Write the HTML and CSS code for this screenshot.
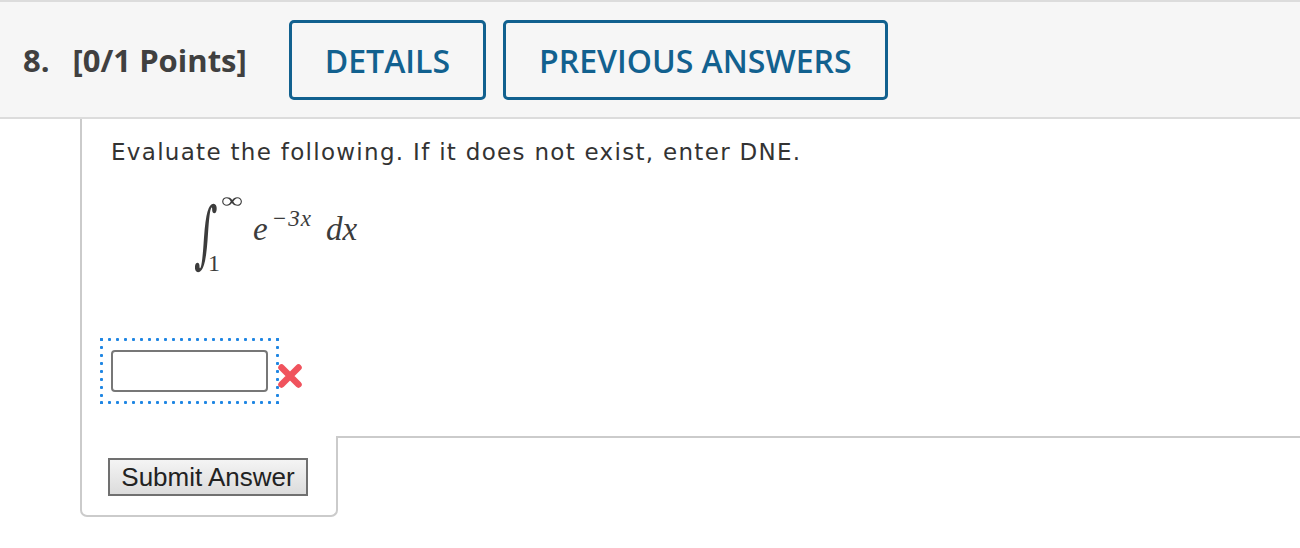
FILE: index.html
```html
<!DOCTYPE html>
<html lang="en">
<head>
  <meta charset="UTF-8" />
  <title>Question 8</title>
  <link rel="stylesheet" href="styles.css">
</head>
<body>

<!--  QUESTION HEADER  -->
<header class="q-head">
  <h2 class="q-title"><span class="q-num">8.</span>[0/1 Points]</h2>
  <button class="q-btn">DETAILS</button>
  <button class="q-btn">PREVIOUS ANSWERS</button>
</header>

<!--  QUESTION BODY  -->
<div class="q-body">
  <p class="q-text">Evaluate the following. If it does not exist, enter DNE.</p>

  <div class="math">
    <span class="int">&int;</span>
    <span class="limits"><span class="lim-up">&infin;</span><span class="lim-lo">1</span></span>
    <span class="expr">e<span class="pow">&minus;3x</span></span>
    <span class="dx">dx</span>
  </div>

  <div class="answer-row">
    <div class="answer-box"><input type="text" class="answer-input"></div>
    <svg class="mark" width="28" height="28" viewBox="0 0 28 28">
      <path d="M5.5 5.5 L22.5 22.5 M22.5 5.5 L5.5 22.5" stroke="#f0535d" stroke-width="6.5" stroke-linecap="round"/>
    </svg>
  </div>
</div>

<!--  SUBMIT  -->
<div class="q-foot">
  <div class="submit-box"><button class="submit-btn">Submit Answer</button></div>
  <div class="foot-rest"></div>
</div>

</body>
</html>
```

FILE: styles.css
```css
/* ----------  GLOBAL  ---------- */
*{box-sizing:border-box}
html,body{margin:0;padding:0;background:#fff}
body{font-family:"Open Sans",Arial,sans-serif;color:#333}

/* ----------  HEADER  ---------- */
.q-head{display:flex;align-items:center;background:#f6f6f6;border-top:2px solid #dcdcdc;border-bottom:2px solid #dcdcdc;padding:18px 23px 17px}
.q-title{margin:0 42px 0 0;font-size:31px;font-weight:700;color:#404040;white-space:pre}
.q-num{margin-right:23px}
.q-btn{height:80px;margin-right:17px;padding:0 33px;background:transparent;border:3px solid #12618f;border-radius:5px;color:#12618f;font-family:"Open Sans",Arial,sans-serif;font-size:32px;font-weight:600;cursor:pointer}

/* ----------  BODY  ---------- */
.q-body{margin-left:80px;border-left:2px solid #cbcbcb;padding:18px 0 32px 29px}
.q-text{margin:0;font-family:"DejaVu Sans",Verdana,sans-serif;font-size:23px;letter-spacing:1.3px;line-height:30px;color:#333}

/* math: integral with limits, then e^(-3x) dx */
.math{display:flex;align-items:flex-start;height:96px;margin:20px 0 0 81px;font-family:"Liberation Serif","DejaVu Serif",serif;color:#3c3c3c}
.int{display:flex;justify-content:center;width:28px;font-family:"DejaVu Serif",serif;font-size:50px;line-height:50px;margin-top:22px;transform:scale(.78,1.46) skewX(-6deg)}
.limits{display:flex;flex-direction:column;width:33px;height:88px;font-size:24px;line-height:1}
.lim-up{font-size:31px;line-height:20px;margin:4px 0 0 1px;transform:scaleY(.72)}
.lim-lo{margin:auto 0 0 -12px}
.expr{font-style:italic;font-size:33px;line-height:32px;margin:26px 0 0 0}
.pow{display:inline-block;vertical-align:top;margin:-10px 0 0 4px;font-size:23px;letter-spacing:1px}
.dx{font-style:italic;font-size:33px;line-height:32px;margin:26px 0 0 14px}

/* answer field */
.answer-row{display:flex;align-items:center;margin:55px 0 0 -11px}
.answer-box{padding:12px 11px;background:
  radial-gradient(circle at 1.5px 1.5px,#1f86e3 1.3px,transparent 1.8px) 0 0/8px 3px repeat-x,
  radial-gradient(circle at 1.5px 1.5px,#1f86e3 1.3px,transparent 1.8px) 0 100%/8px 3px repeat-x,
  radial-gradient(circle at 1.5px 1.5px,#1f86e3 1.3px,transparent 1.8px) 0 0/3px 8px repeat-y,
  radial-gradient(circle at 1.5px 1.5px,#1f86e3 1.3px,transparent 1.8px) 100% 0/3px 8px repeat-y}
.answer-input{display:block;width:157px;height:42px;border:2px solid #777;border-radius:4px;background:#fff}
.mark{margin:9px 0 0 -3px;filter:blur(.6px)}

/* ----------  FOOTER  ---------- */
.q-foot{display:flex}
.submit-box{width:258px;margin-left:80px;border:2px solid #cbcbcb;border-top:none;border-radius:0 0 7px 7px;padding:22px 0 19px 26px}
.foot-rest{flex:1;border-top:2px solid #cbcbcb}
.submit-btn{display:block;width:200px;height:38px;padding:0;border:2px solid #707070;background:linear-gradient(#f4f4f4,#dcdcdc);font-family:"Liberation Sans",Arial,sans-serif;font-size:26px;color:#222;cursor:pointer}
```
